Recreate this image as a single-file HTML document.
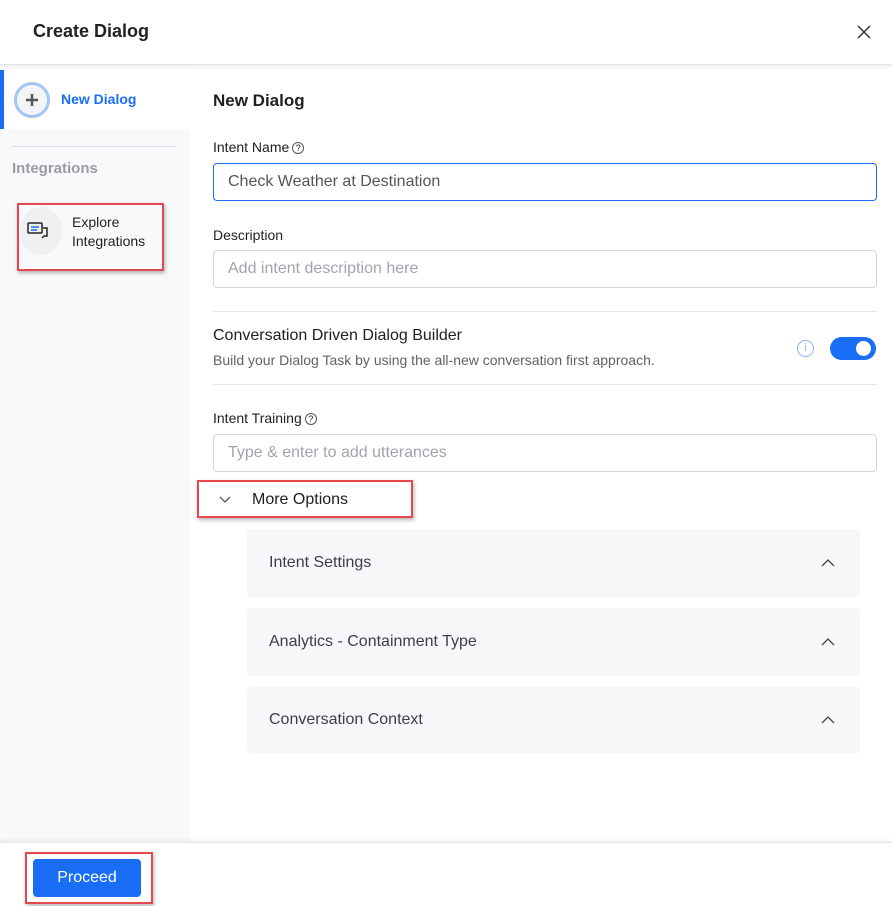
<!DOCTYPE html>
<html><head><style>
*{box-sizing:border-box;margin:0;padding:0}
body{width:892px;height:906px;background:#fff;font-family:"Liberation Sans",sans-serif;position:relative;overflow:hidden;color:#202124}
.abs{position:absolute}
.hdr{left:0;top:0;width:892px;height:65px;border-bottom:1px solid #e4e5e7;box-shadow:0 2px 4px rgba(0,0,0,.08)}
.side{left:0;top:70px;width:190px;height:772px;background:#f8f9fa}
.inp{position:absolute;left:213px;width:664px;height:38px;border:1px solid #d0d5dd;border-radius:4px;font-size:16px;color:#a0a4aa;padding:9px 14px}
.lbl{position:absolute;left:213px;font-size:14px;color:#202124}
.acc{position:absolute;left:247px;width:613px;background:#f6f7f9;border-radius:4px;font-size:16px;color:#3c3f44;padding-left:22px}
.red{position:absolute;border:2px solid #e5484d;box-shadow:1px 2px 4px rgba(0,0,0,.3)}
.q{display:inline-block;width:12px;height:12px;border:1px solid #555;border-radius:50%;font-size:9px;text-align:center;line-height:10px;vertical-align:1px;margin-left:3px}
</style></head><body>
<div class="abs hdr"><div class="abs" style="left:33px;top:21px;font-size:18px;font-weight:600;color:#202124">Create Dialog</div>
<svg class="abs" style="left:857px;top:25px" width="14" height="14"><path d="M1 1L13 13M13 1L1 13" stroke="#333" stroke-width="1.5"/></svg></div>
<div class="abs side"></div>
<div class="abs" style="left:0;top:70px;width:190px;height:59px;background:#fff"></div>
<div class="abs" style="left:0;top:70px;width:4px;height:59px;background:#1a6ef5"></div>
<div class="abs" style="left:14px;top:82px;width:36px;height:36px;border:3px solid #a3c4f7;border-radius:50%;background:#f3f4f6"></div>
<svg class="abs" style="left:24px;top:92px" width="16" height="16"><path d="M8 2v12M2 8h12" stroke="#555" stroke-width="2.5"/></svg>
<div class="abs" style="left:61px;top:91px;font-size:14px;font-weight:bold;color:#1a6ef5">New Dialog</div>
<div class="abs" style="left:12px;top:146px;width:165px;height:1px;background:#dcdde0"></div>
<div class="abs" style="left:12px;top:160px;font-size:15px;font-weight:bold;color:#9a9ca0">Integrations</div>
<div class="abs" style="left:20px;top:207px;width:42px;height:48px;border-radius:50%;background:#eef0f2"></div>
<svg class="abs" style="left:27px;top:222px" width="22" height="18"><rect x="1" y="1" width="14" height="10" rx="1" fill="none" stroke="#222" stroke-width="1.5"/><path d="M4 5h8M4 8h6" stroke="#1a6ef5" stroke-width="1.5"/><path d="M16 6h4v8h-3l-2 2" fill="none" stroke="#222" stroke-width="1.5"/></svg>
<div class="abs" style="left:72px;top:213px;font-size:14px;line-height:19px;color:#222">Explore<br>Integrations</div>
<div class="red" style="left:17px;top:203px;width:147px;height:68px"></div>
<div class="abs" style="left:213px;top:91px;font-size:17px;font-weight:600">New Dialog</div>
<div class="lbl" style="top:139px">Intent Name<span class="q">?</span></div>
<div class="inp" style="top:163px;border-color:#1a6ef5;color:#555">Check Weather at Destination</div>
<div class="lbl" style="top:227px">Description</div>
<div class="inp" style="top:250px">Add intent description here</div>
<div class="abs" style="left:213px;top:311px;width:664px;height:1px;background:#e4e5e7"></div>
<div class="abs" style="left:213px;top:327px;font-size:16px">Conversation Driven Dialog Builder</div>
<div class="abs" style="left:213px;top:352px;font-size:14px;color:#5f6368">Build your Dialog Task by using the all-new conversation first approach.</div>
<div class="abs" style="left:797px;top:340px;width:17px;height:17px;border:1.5px solid #8fb5f5;border-radius:50%;color:#8fb5f5;font-size:11px;text-align:center;line-height:14px">i</div>
<div class="abs" style="left:830px;top:337px;width:46px;height:23px;border-radius:12px;background:#1a6ef5"><div class="abs" style="left:26px;top:4px;width:15px;height:15px;border-radius:50%;background:#fff"></div></div>
<div class="abs" style="left:213px;top:384px;width:664px;height:1px;background:#e4e5e7"></div>
<div class="lbl" style="top:410px">Intent Training<span class="q">?</span></div>
<div class="inp" style="top:434px">Type &amp; enter to add utterances</div>
<svg class="abs" style="left:219px;top:496px" width="12" height="8"><path d="M1 1l5 5 5-5" fill="none" stroke="#555" stroke-width="1.3"/></svg>
<div class="abs" style="left:252px;top:491px;font-size:16px">More Options</div>
<div class="red" style="left:197px;top:480px;width:216px;height:38px"></div>
<div class="acc" style="top:529px;height:68px;line-height:68px">Intent Settings</div>
<div class="acc" style="top:608px;height:68px;line-height:68px">Analytics - Containment Type</div>
<div class="acc" style="top:687px;height:66px;line-height:66px">Conversation Context</div>
<svg class="abs" style="left:821px;top:558px" width="14" height="9"><path d="M1 8l6-6 6 6" fill="none" stroke="#444" stroke-width="1.3"/></svg>
<svg class="abs" style="left:821px;top:637px" width="14" height="9"><path d="M1 8l6-6 6 6" fill="none" stroke="#444" stroke-width="1.3"/></svg>
<svg class="abs" style="left:821px;top:715px" width="14" height="9"><path d="M1 8l6-6 6 6" fill="none" stroke="#444" stroke-width="1.3"/></svg>
<div class="abs" style="left:0;top:842px;width:892px;height:64px;border-top:1px solid #e4e5e7;box-shadow:0 -2px 4px rgba(0,0,0,.06);background:#fff"></div>
<div class="abs" style="left:33px;top:859px;width:108px;height:38px;background:#1a6ef5;border-radius:4px;color:#fff;font-size:16px;text-align:center;line-height:38px">Proceed</div>
<div class="red" style="left:25px;top:852px;width:128px;height:52px"></div>
</body></html>
